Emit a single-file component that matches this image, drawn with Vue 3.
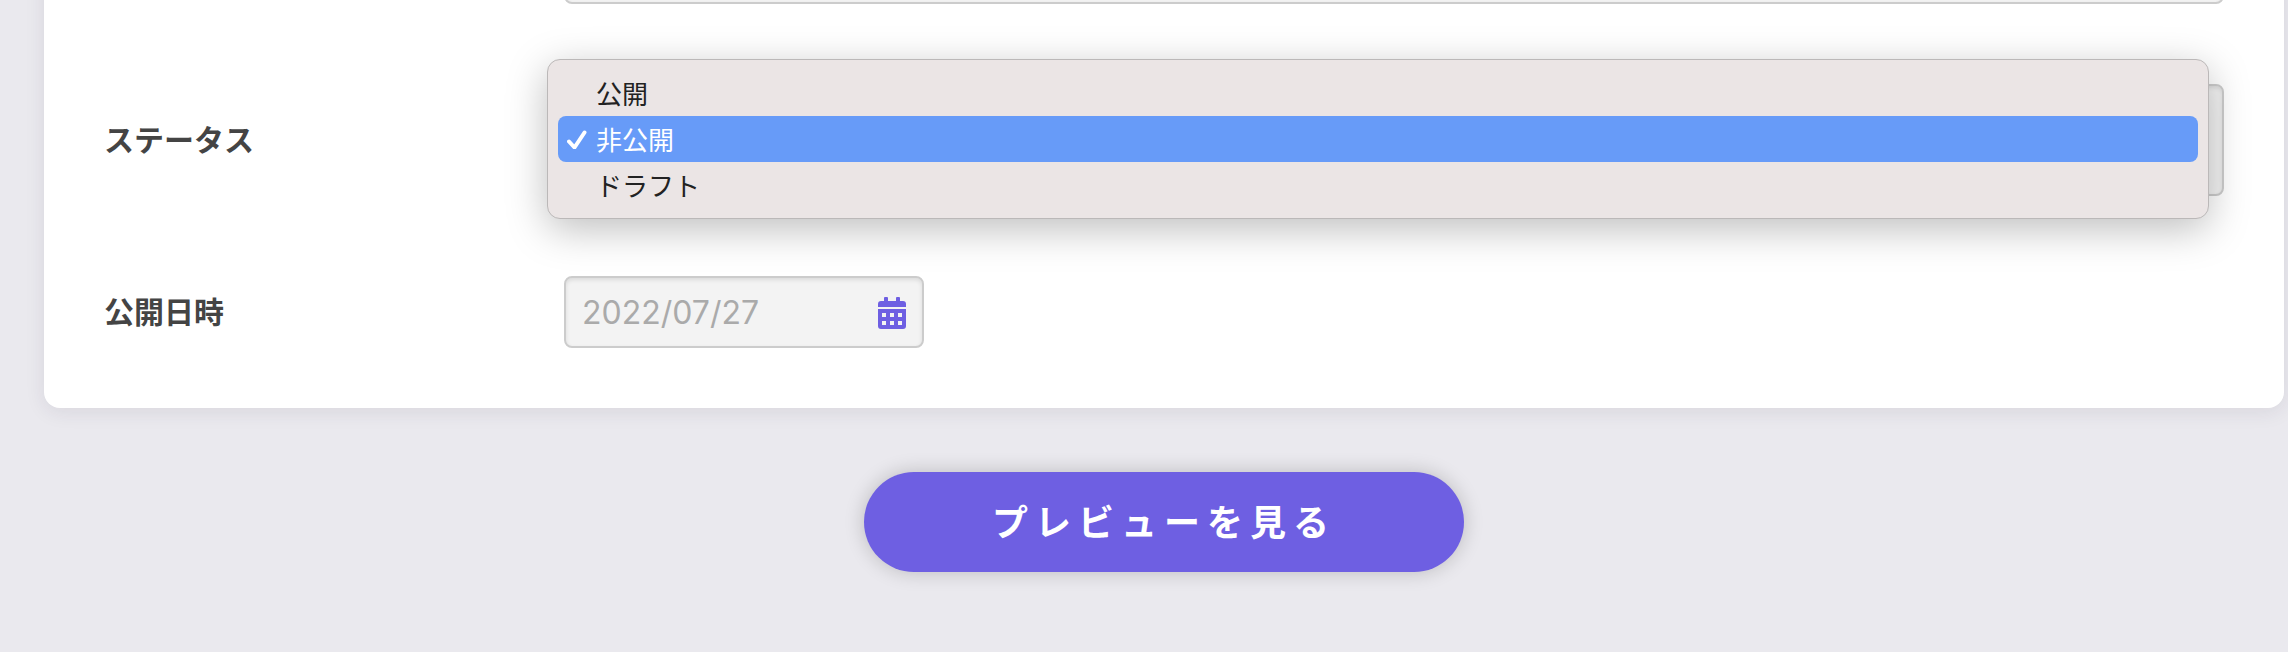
<script setup>
import { ref } from 'vue'

const statuses = ['公開', '非公開', 'ドラフト']
const status = ref('非公開')
const date = ref('2022/07/27')
const title = ref('')
</script>

<template>
  <main class="page">
    <form class="form" @submit.prevent>
      <section class="card">
        <div class="row">
          <span class="label"></span>
          <input v-model="title" class="field" type="text" aria-label="タイトル" />
        </div>

        <div class="row">
          <label class="label" for="status">ステータス</label>
          <div class="select-wrap">
            <select id="status" v-model="status" class="field select">
              <option v-for="s in statuses" :key="s">{{ s }}</option>
            </select>
            <ul class="menu" role="listbox" aria-label="ステータス">
              <li
                v-for="s in statuses"
                :key="s"
                class="option"
                :class="{ selected: s === status }"
                role="option"
                :aria-selected="s === status"
                @click="status = s"
              >
                <span class="mark">
                  <svg v-if="s === status" width="20" height="20" viewBox="0 0 20 20" aria-hidden="true">
                    <path d="M2 12.5 L7.5 18.5 L17.5 3.5" />
                  </svg>
                </span>
                {{ s }}
              </li>
            </ul>
          </div>
        </div>

        <div class="row">
          <label class="label" for="date">公開日時</label>
          <div class="date-wrap">
            <input id="date" v-model="date" class="field date" type="text" />
            <svg class="calendar" width="28" height="32" viewBox="0 0 28 32" aria-hidden="true">
              <path d="M0 10V7a3 3 0 0 1 3-3h3V1a1 1 0 0 1 1-1h2a1 1 0 0 1 1 1v3h8V1a1 1 0 0 1 1-1h2a1 1 0 0 1 1 1v3h3a3 3 0 0 1 3 3v3z" />
              <path fill-rule="evenodd" d="M0 12h28v17a3 3 0 0 1-3 3H3a3 3 0 0 1-3-3zM4 16v4h4v-4zM12 16v4h4v-4zM20 16v4h4v-4zM4 24v4h4v-4zM12 24v4h4v-4zM20 24v4h4v-4z" />
            </svg>
          </div>
        </div>
      </section>

      <button class="preview" type="button">プレビューを見る</button>
    </form>
  </main>
</template>

<style>
body {
  background: #eae9ee;
}
</style>

<style scoped>
.page {
  min-height: 100vh;
  overflow: hidden;
  box-sizing: border-box;
  padding: 0 4px 0 44px;
  background: #eae9ee;
  color: #444;
  font-family: "Noto Sans CJK JP", sans-serif;
}

.form {
  display: flex;
  flex-direction: column;
  align-items: center;
  gap: 64px;
  margin-top: -128px;
  padding-bottom: 80px;
}

.card {
  display: flex;
  flex-direction: column;
  gap: 80px;
  width: 100%;
  box-sizing: border-box;
  padding: 60px;
  border-radius: 16px;
  background: #fff;
  box-shadow: 0 4px 20px rgba(40, 30, 70, 0.09);
}

.row {
  display: grid;
  grid-template-columns: 460px 1fr;
  align-items: center;
}

.label {
  padding-bottom: 4px;
  font-size: 30px;
  line-height: 40px;
  font-weight: 700;
}

.field {
  display: block;
  width: 100%;
  height: 72px;
  box-sizing: border-box;
  margin: 0;
  padding: 0 16px;
  border: 2px solid #ccc;
  border-radius: 8px;
  background: #f3f3f3;
  box-shadow: inset 0 2px 4px rgba(0, 0, 0, 0.1);
  color: #aaa;
  font-family: Inter, "Noto Sans CJK JP", sans-serif;
  font-size: 32px;
  outline: none;
}

.select-wrap,
.date-wrap {
  position: relative;
}

.date-wrap {
  width: 360px;
}

.select {
  height: 112px;
  appearance: none;
}

.menu {
  position: absolute;
  top: -25px;
  left: -17px;
  right: 15px;
  margin: 0;
  padding: 10px;
  border: 1px solid #bbb8b8;
  border-radius: 13px;
  background: #ebe5e5;
  box-shadow: 0 10px 40px rgba(0, 0, 0, 0.26);
  list-style: none;
}

.option {
  display: flex;
  align-items: center;
  height: 46px;
  border-radius: 8px;
  color: #222;
  font-size: 26px;
  line-height: 46px;
}

.selected {
  background: #679bf8;
  color: #fff;
}

.mark {
  display: flex;
  width: 29px;
  padding-left: 9px;
}

.mark path {
  fill: none;
  stroke: #fff;
  stroke-width: 4;
  stroke-linecap: round;
  stroke-linejoin: round;
}

.calendar {
  position: absolute;
  top: 21px;
  right: 18px;
  fill: #6e5fe2;
  pointer-events: none;
}

.preview {
  width: 600px;
  max-width: 100%;
  height: 100px;
  padding: 0 0 4px;
  border: 0;
  border-radius: 50px;
  background: #6e5fe2;
  box-shadow: 0 0 20px rgba(0, 0, 0, 0.2);
  color: #fff;
  font-family: inherit;
  font-size: 36px;
  font-weight: 700;
  letter-spacing: 7px;
  cursor: pointer;
}
</style>
